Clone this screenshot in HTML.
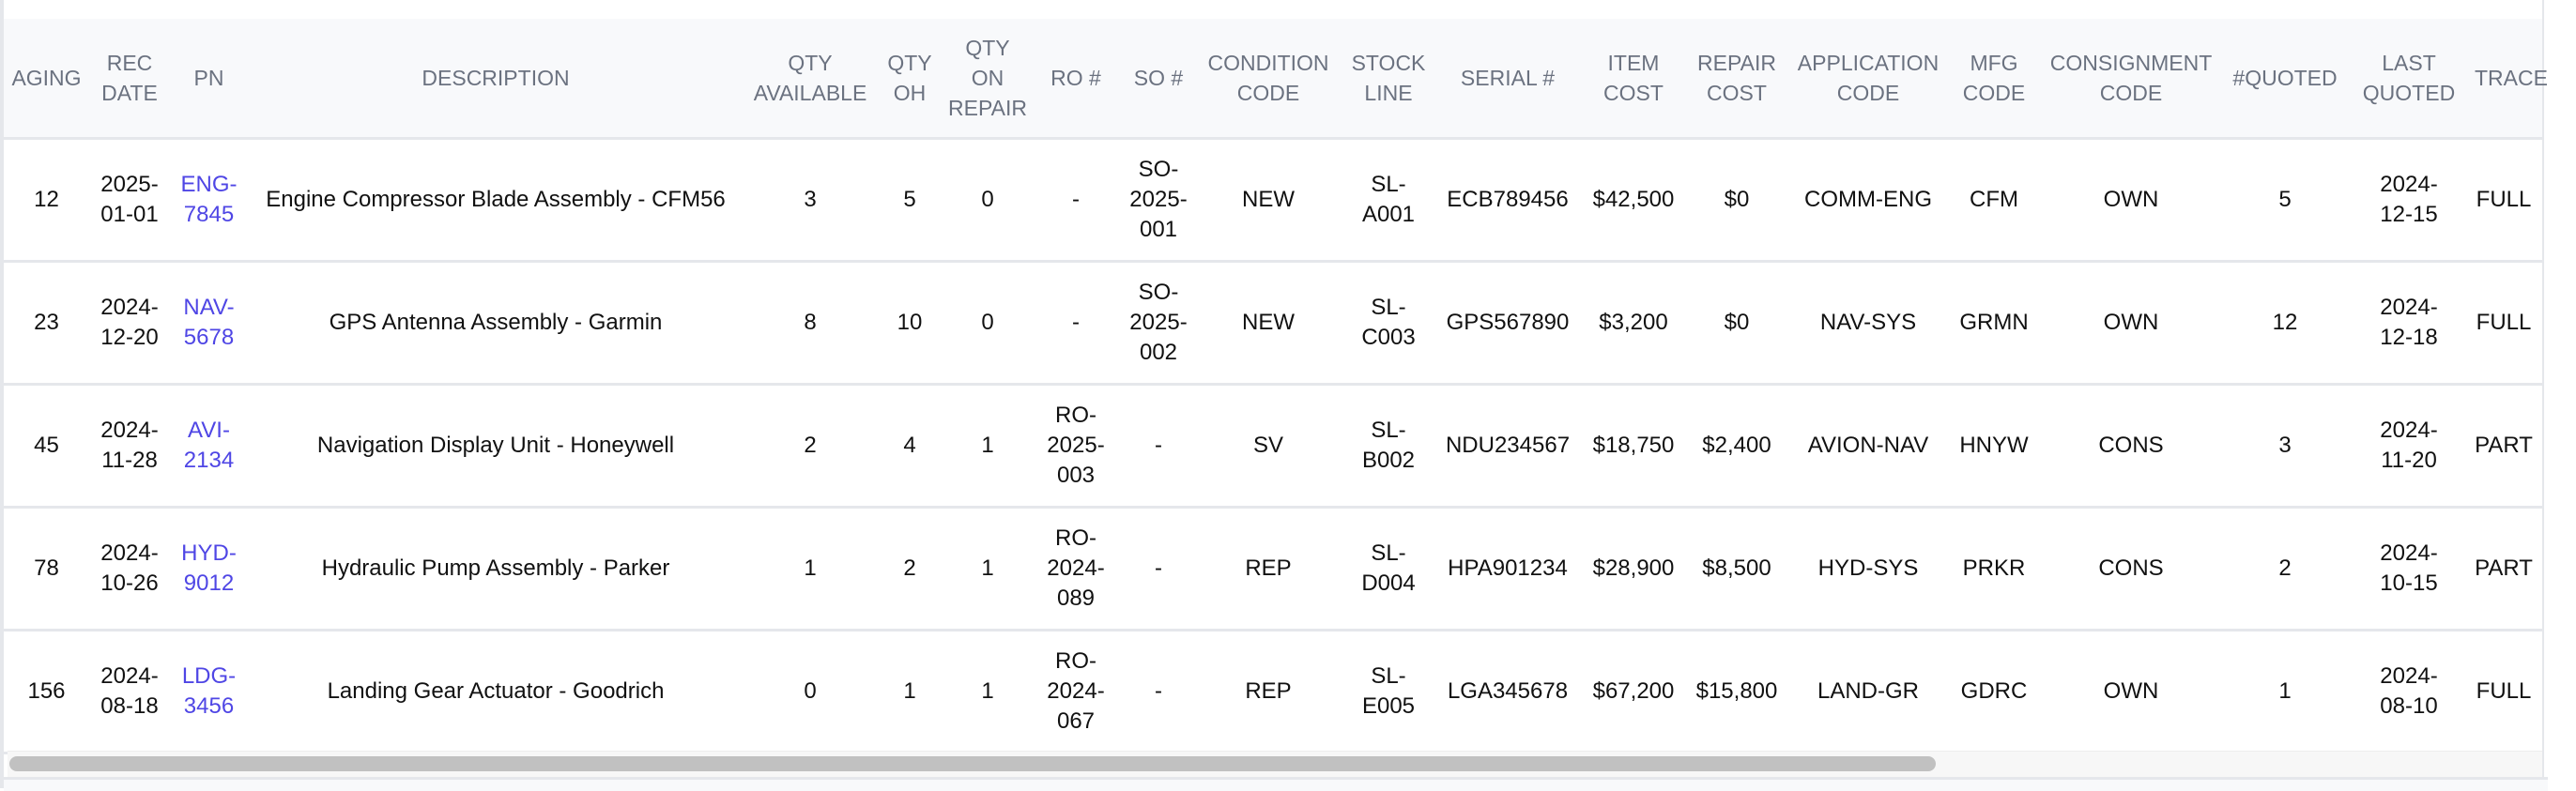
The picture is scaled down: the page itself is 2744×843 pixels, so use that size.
<!DOCTYPE html>
<html><head><meta charset="utf-8"><style>
html,body{margin:0;padding:0;width:2744px;height:840px;background:#fff;overflow:hidden;font-family:"Liberation Sans",sans-serif}
.wrap{position:absolute;left:0;top:0;width:2710px;height:840px;border-left:4px solid #e5e7eb;border-right:2px solid #e5e7eb;box-sizing:border-box;background:#fff}
.hb{position:absolute;left:0;top:20px;width:2704px;height:126px;background:#f8f9fb;border-bottom:3px solid #e5e7eb}
table{position:absolute;left:0;top:20px;border-collapse:collapse;table-layout:fixed;width:2704px}
th{background:#f8f9fb;color:#6b7280;font-weight:normal;font-size:23px;line-height:32px;height:126px;border-bottom:3px solid #e5e7eb;text-align:center;padding:0;white-space:nowrap}
th.tr{text-align:left;padding-left:0}
td{font-size:24px;line-height:32px;color:#111;height:128px;border-bottom:3px solid #e5e7eb;text-align:center;padding:0;white-space:nowrap}
td.tr{padding-right:10px}
td.pn{color:#4f46e5}
.sb{position:absolute;left:4px;top:800px;width:2700px;height:28px;background:#f7f7f7;border-top:1px solid #eee}
.th{position:absolute;left:6px;top:806px;width:2052px;height:16px;border-radius:8px;background:#c1c1c1}
.bot{position:absolute;left:0;top:828px;width:2710px;height:12px;background:#f8f9fb;border-top:3px solid #e5e7eb}
</style></head><body>
<div class="wrap">
<div class="hb"></div>
<table>
<colgroup><col style="width:91px"><col style="width:86px"><col style="width:83px"><col style="width:528px"><col style="width:142px"><col style="width:70px"><col style="width:96px"><col style="width:92px"><col style="width:84px"><col style="width:150px"><col style="width:106px"><col style="width:148px"><col style="width:120px"><col style="width:100px"><col style="width:180px"><col style="width:88px"><col style="width:204px"><col style="width:124px"><col style="width:140px"><col style="width:72px"></colgroup>
<tr><th>AGING</th><th>REC<br>DATE</th><th>PN</th><th>DESCRIPTION</th><th>QTY<br>AVAILABLE</th><th>QTY<br>OH</th><th>QTY<br>ON<br>REPAIR</th><th>RO #</th><th>SO #</th><th>CONDITION<br>CODE</th><th>STOCK<br>LINE</th><th>SERIAL #</th><th>ITEM<br>COST</th><th>REPAIR<br>COST</th><th>APPLICATION<br>CODE</th><th>MFG<br>CODE</th><th>CONSIGNMENT<br>CODE</th><th>#QUOTED</th><th>LAST<br>QUOTED</th><th class="tr">TRACE</th></tr>
<tr><td>12</td><td>2025-<br>01-01</td><td class="pn">ENG-<br>7845</td><td>Engine Compressor Blade Assembly - CFM56</td><td>3</td><td>5</td><td>0</td><td>-</td><td>SO-<br>2025-<br>001</td><td>NEW</td><td>SL-<br>A001</td><td>ECB789456</td><td>$42,500</td><td>$0</td><td>COMM-ENG</td><td>CFM</td><td>OWN</td><td>5</td><td>2024-<br>12-15</td><td class="tr">FULL</td></tr>
<tr><td>23</td><td>2024-<br>12-20</td><td class="pn">NAV-<br>5678</td><td>GPS Antenna Assembly - Garmin</td><td>8</td><td>10</td><td>0</td><td>-</td><td>SO-<br>2025-<br>002</td><td>NEW</td><td>SL-<br>C003</td><td>GPS567890</td><td>$3,200</td><td>$0</td><td>NAV-SYS</td><td>GRMN</td><td>OWN</td><td>12</td><td>2024-<br>12-18</td><td class="tr">FULL</td></tr>
<tr><td>45</td><td>2024-<br>11-28</td><td class="pn">AVI-<br>2134</td><td>Navigation Display Unit - Honeywell</td><td>2</td><td>4</td><td>1</td><td>RO-<br>2025-<br>003</td><td>-</td><td>SV</td><td>SL-<br>B002</td><td>NDU234567</td><td>$18,750</td><td>$2,400</td><td>AVION-NAV</td><td>HNYW</td><td>CONS</td><td>3</td><td>2024-<br>11-20</td><td class="tr">PART</td></tr>
<tr><td>78</td><td>2024-<br>10-26</td><td class="pn">HYD-<br>9012</td><td>Hydraulic Pump Assembly - Parker</td><td>1</td><td>2</td><td>1</td><td>RO-<br>2024-<br>089</td><td>-</td><td>REP</td><td>SL-<br>D004</td><td>HPA901234</td><td>$28,900</td><td>$8,500</td><td>HYD-SYS</td><td>PRKR</td><td>CONS</td><td>2</td><td>2024-<br>10-15</td><td class="tr">PART</td></tr>
<tr><td>156</td><td>2024-<br>08-18</td><td class="pn">LDG-<br>3456</td><td>Landing Gear Actuator - Goodrich</td><td>0</td><td>1</td><td>1</td><td>RO-<br>2024-<br>067</td><td>-</td><td>REP</td><td>SL-<br>E005</td><td>LGA345678</td><td>$67,200</td><td>$15,800</td><td>LAND-GR</td><td>GDRC</td><td>OWN</td><td>1</td><td>2024-<br>08-10</td><td class="tr">FULL</td></tr>
</table>
<div class="sb"></div><div class="th"></div><div class="bot"></div>
</div>
</body></html>
